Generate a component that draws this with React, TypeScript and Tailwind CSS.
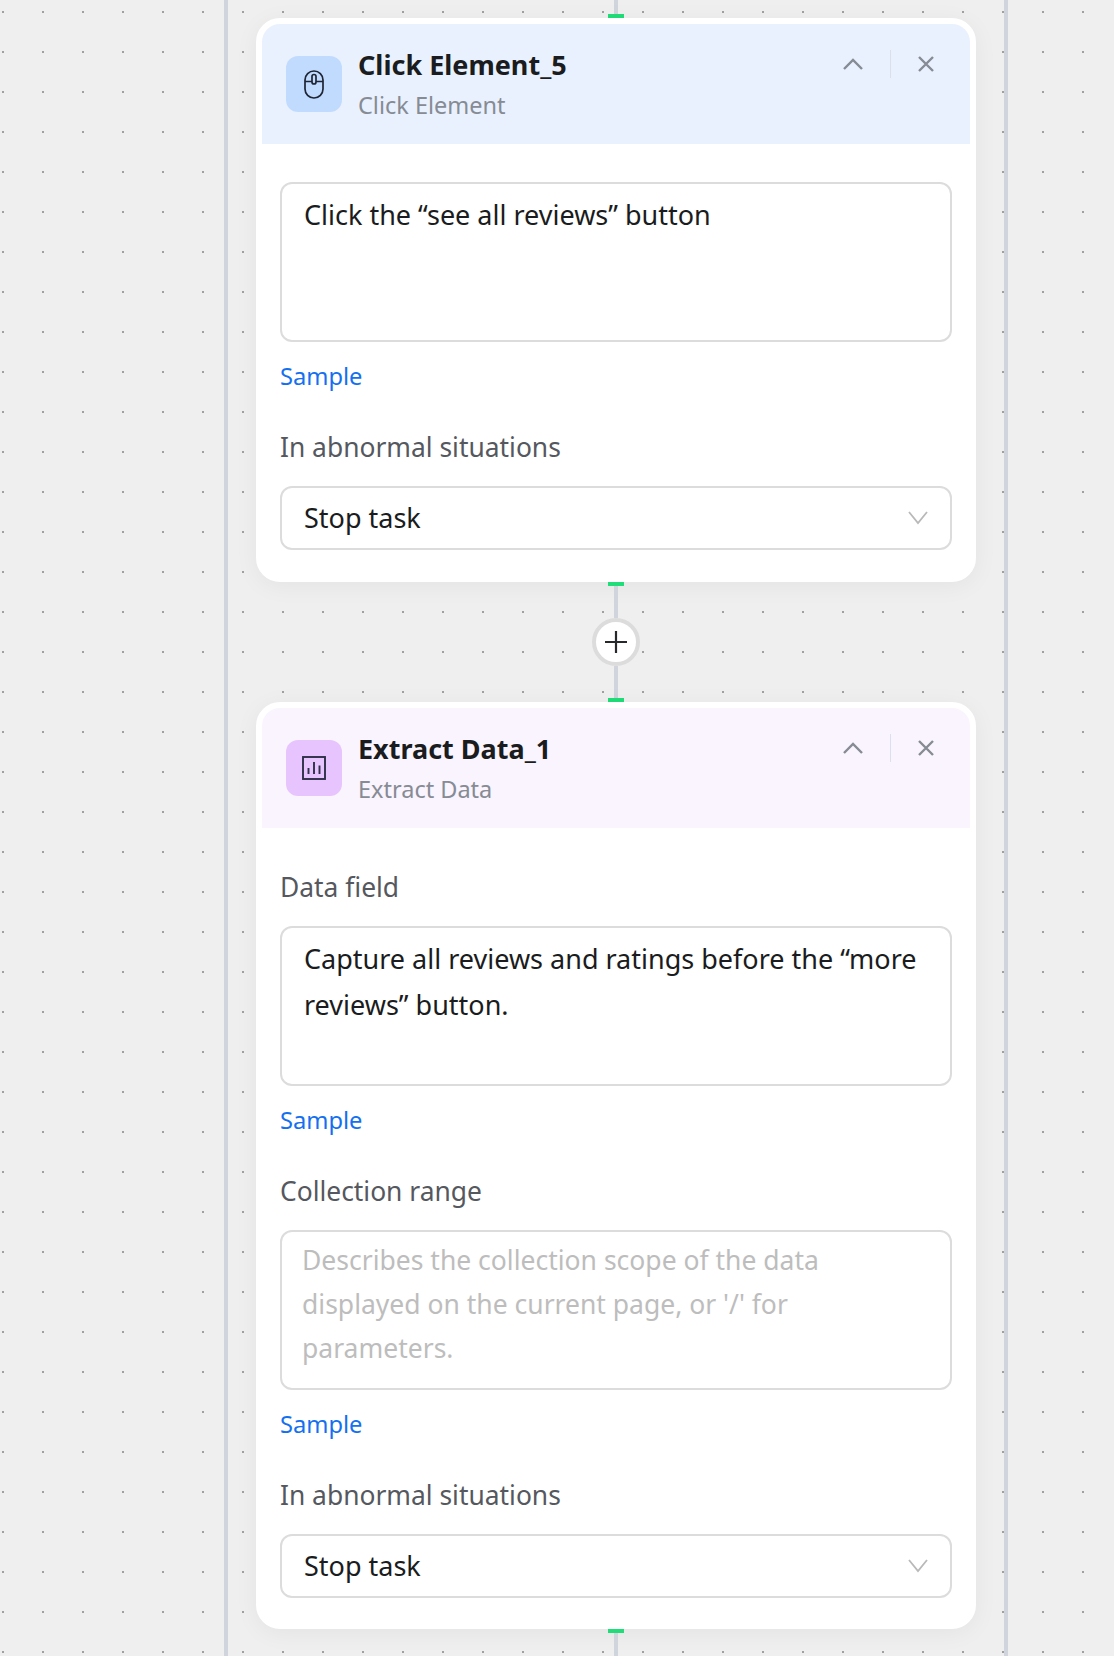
import type { ReactNode } from "react";

const FONT = "font-['Noto_Sans','Lato',sans-serif]";

function MouseIcon() {
  return (
    <svg width="20" height="29" viewBox="0 0 20 29" fill="none" stroke="#1f2533" strokeWidth="1.7">
      <rect x="1" y="1" width="18" height="27" rx="9" />
      <path d="M1 11.5h7M12 11.5h7" />
      <rect x="8" y="4.5" width="4" height="9.5" rx="2" />
    </svg>
  );
}

function ChartIcon() {
  return (
    <svg width="24" height="24" viewBox="0 0 24 24" fill="none" stroke="#2f3049" strokeWidth="1.9">
      <rect x="1" y="1" width="22" height="22" />
      <path d="M6.5 12v6M12 6v12M17.5 9.5V18" />
    </svg>
  );
}

function HeaderActions() {
  return (
    <div className="ml-auto mt-[26px] flex items-center self-start pr-[36px]">
      <svg width="20" height="12" viewBox="0 0 20 12" fill="none" stroke="#868b94" strokeWidth="2.4">
        <path d="M1 11l9-9 9 9" />
      </svg>
      <div className="mx-[27px] h-[28px] w-px bg-[#dbe1ea]" />
      <svg width="16" height="16" viewBox="0 0 16 16" fill="none" stroke="#868b94" strokeWidth="2.4">
        <path d="M1 1l14 14M15 1L1 15" />
      </svg>
    </div>
  );
}

function CardHeader({ title, kind, tint, iconBg, icon }: { title: string; kind: string; tint: string; iconBg: string; icon: ReactNode }) {
  return (
    <div className={`flex h-[120px] items-center rounded-t-[18px] pl-6 ${tint}`}>
      <div className={`flex size-[56px] items-center justify-center rounded-[12px] ${iconBg}`}>{icon}</div>
      <div className="mt-[2px] ml-4">
        <div className="text-[27px] leading-[40px] font-bold text-[#1a1c20]">{title}</div>
        <div className="text-[23.5px] leading-[40px] text-[#868b94]">{kind}</div>
      </div>
      <HeaderActions />
    </div>
  );
}

function Label({ children }: { children: ReactNode }) {
  return <div className="text-[26.4px] leading-[36px] text-[#55585e]">{children}</div>;
}

function TextBox({ children, muted }: { children: ReactNode; muted?: boolean }) {
  return (
    <div
      className={`h-[160px] rounded-[12px] border-2 border-[#dcdcdc] ${
        muted
          ? "pt-[6px] pr-[24px] pl-[20px] text-[26.5px] leading-[44px] text-[#bdbdbd]"
          : "pt-[8px] pl-[22px] text-[27px] leading-[46px] text-[#1a1c20]"
      }`}
    >
      {children}
    </div>
  );
}

function Sample() {
  return <div className="mt-[18px] text-[23.7px] leading-[32px] text-[#1570ef]">Sample</div>;
}

function StopTask() {
  return (
    <div className="flex h-[64px] items-center justify-between rounded-[12px] border-2 border-[#dcdcdc] pr-[22px] pl-[22px] text-[27px] text-[#1a1c20]">
      Stop task
      <svg width="20" height="14" viewBox="0 0 20 14" fill="none" stroke="#b9b9b9" strokeWidth="1.8">
        <path d="M1 1l9 11 9-11" />
      </svg>
    </div>
  );
}

function Card({ children }: { children: ReactNode }) {
  return (
    <div className="w-[720px] rounded-[24px] border-[6px] border-white bg-white shadow-[0_4px_24px_rgba(0,0,0,0.05)]">
      {children}
    </div>
  );
}

function GreenTick() {
  return <div className="h-1 w-4 bg-[#20dd79]" />;
}

export default function App() {
  return (
    <div
      className={`h-[1656px] w-[1114px] overflow-hidden bg-[#efefef] bg-[radial-gradient(circle,#a0a0a0_1px,transparent_1.4px)] bg-[size:40px_40px] bg-[position:-17px_-8px] ${FONT}`}
    >
      <div className="ml-[224px] flex min-h-full w-[784px] flex-col items-center border-x-4 border-[#d0d5dd]">
        <div className="h-[14px] w-1 bg-[#d0d5dd]" />
        <GreenTick />

        <Card>
          <CardHeader title="Click Element_5" kind="Click Element" tint="bg-[#e9f1fe]" iconBg="bg-[#c1dbff]" icon={<MouseIcon />} />
          <div className="px-[18px] pt-[38px] pb-[26px]">
            <TextBox>Click the “see all reviews” button</TextBox>
            <Sample />
            <div className="mt-[37px]">
              <Label>In abnormal situations</Label>
            </div>
            <div className="mt-[21px]">
              <StopTask />
            </div>
          </div>
        </Card>

        <GreenTick />
        <div className="h-[32px] w-1 bg-[#d0d5dd]" />
        <div className="flex size-[48px] items-center justify-center rounded-full border-4 border-[#dcdcdc] bg-white">
          <svg width="24" height="24" viewBox="0 0 24 24" fill="none" stroke="#26282c" strokeWidth="2.2">
            <path d="M12 1v22M1 12h22" />
          </svg>
        </div>
        <div className="h-[32px] w-1 bg-[#d0d5dd]" />
        <GreenTick />

        <Card>
          <CardHeader title="Extract Data_1" kind="Extract Data" tint="bg-[#f9f4fe]" iconBg="bg-[#e7c4fd]" icon={<ChartIcon />} />
          <div className="px-[18px] pt-[41px] pb-[25px]">
            <Label>Data field</Label>
            <div className="mt-[21px]">
              <TextBox>Capture all reviews and ratings before the “more reviews” button.</TextBox>
            </div>
            <Sample />
            <div className="mt-[37px]">
              <Label>Collection range</Label>
            </div>
            <div className="mt-[21px]">
              <TextBox muted>Describes the collection scope of the data displayed on the current page, or '/' for parameters.</TextBox>
            </div>
            <Sample />
            <div className="mt-[37px]">
              <Label>In abnormal situations</Label>
            </div>
            <div className="mt-[21px]">
              <StopTask />
            </div>
          </div>
        </Card>

        <GreenTick />
        <div className="h-[40px] w-1 bg-[#d0d5dd]" />
      </div>
    </div>
  );
}
